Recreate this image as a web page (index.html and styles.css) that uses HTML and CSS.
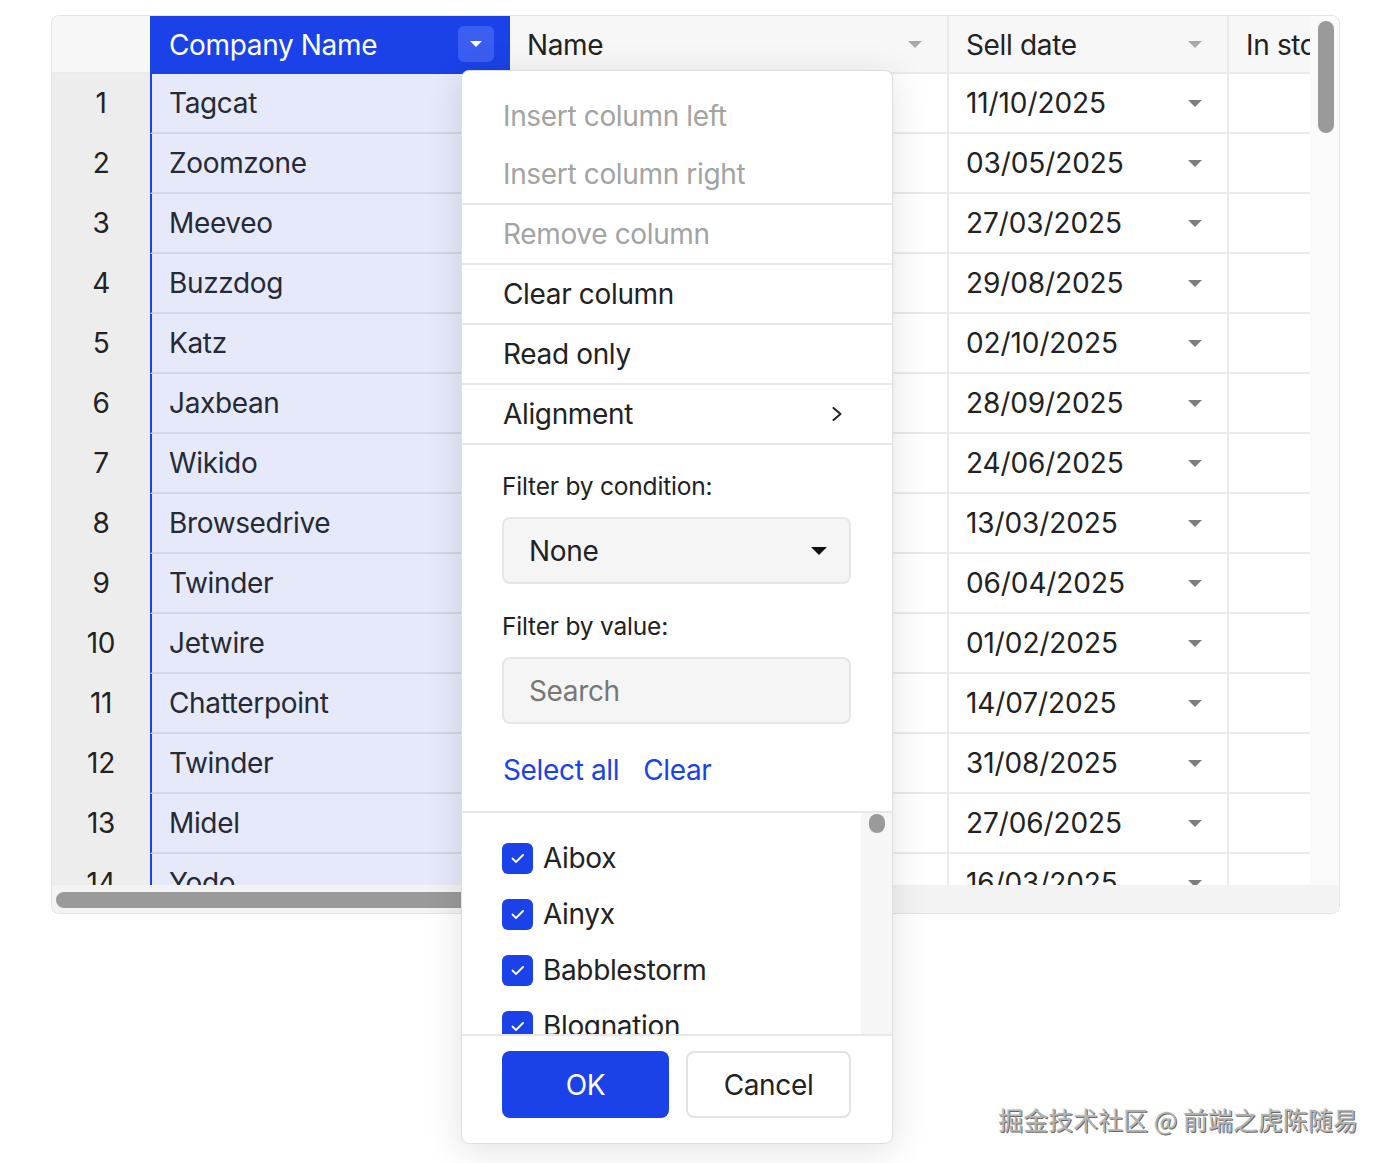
FILE: index.html
```html
<!DOCTYPE html>
<html lang="en">
<head>
<meta charset="utf-8">
<title>Data grid – column menu</title>
<link rel="stylesheet" href="styles.css">
</head>
<body>
<div class="page">
  <div class="hot">
    <div class="viewport">
      <div class="row head">
        <div class="cell corner"></div>
        <div class="cell colhead sel"><span class="lbl">Company Name</span><span class="menu-btn"><i class="tri white"></i></span></div>
        <div class="cell colhead"><span class="lbl">Name</span><i class="tri light"></i></div>
        <div class="cell colhead"><span class="lbl">Sell date</span><i class="tri light"></i></div>
        <div class="cell colhead last"><span class="lbl">In stock</span></div>
      </div>

      <div class="row"><div class="cell rh">1</div><div class="cell co">Tagcat</div><div class="cell nm">Classic Vest</div><div class="cell dt"><span>11/10/2025</span><i class="tri dark"></i></div><div class="cell st"></div></div>
      <div class="row"><div class="cell rh">2</div><div class="cell co">Zoomzone</div><div class="cell nm">Cycling Cap</div><div class="cell dt"><span>03/05/2025</span><i class="tri dark"></i></div><div class="cell st"></div></div>
      <div class="row"><div class="cell rh">3</div><div class="cell co">Meeveo</div><div class="cell nm">Full-Finger Gloves</div><div class="cell dt"><span>27/03/2025</span><i class="tri dark"></i></div><div class="cell st"></div></div>
      <div class="row"><div class="cell rh">4</div><div class="cell co">Buzzdog</div><div class="cell nm">HL Mountain Frame</div><div class="cell dt"><span>29/08/2025</span><i class="tri dark"></i></div><div class="cell st"></div></div>
      <div class="row"><div class="cell rh">5</div><div class="cell co">Katz</div><div class="cell nm">Half-Finger Gloves</div><div class="cell dt"><span>02/10/2025</span><i class="tri dark"></i></div><div class="cell st"></div></div>
      <div class="row"><div class="cell rh">6</div><div class="cell co">Jaxbean</div><div class="cell nm">HL Road Frame</div><div class="cell dt"><span>28/09/2025</span><i class="tri dark"></i></div><div class="cell st"></div></div>
      <div class="row"><div class="cell rh">7</div><div class="cell co">Wikido</div><div class="cell nm">HL Touring Frame</div><div class="cell dt"><span>24/06/2025</span><i class="tri dark"></i></div><div class="cell st"></div></div>
      <div class="row"><div class="cell rh">8</div><div class="cell co">Browsedrive</div><div class="cell nm">LL Mountain Frame</div><div class="cell dt"><span>13/03/2025</span><i class="tri dark"></i></div><div class="cell st"></div></div>
      <div class="row"><div class="cell rh">9</div><div class="cell co">Twinder</div><div class="cell nm">LL Road Frame</div><div class="cell dt"><span>06/04/2025</span><i class="tri dark"></i></div><div class="cell st"></div></div>
      <div class="row"><div class="cell rh">10</div><div class="cell co">Jetwire</div><div class="cell nm">Long-Sleeve Logo Jersey</div><div class="cell dt"><span>01/02/2025</span><i class="tri dark"></i></div><div class="cell st"></div></div>
      <div class="row"><div class="cell rh">11</div><div class="cell co">Chatterpoint</div><div class="cell nm">Men's Bib-Shorts</div><div class="cell dt"><span>14/07/2025</span><i class="tri dark"></i></div><div class="cell st"></div></div>
      <div class="row"><div class="cell rh">12</div><div class="cell co">Twinder</div><div class="cell nm">Men's Sports Shorts</div><div class="cell dt"><span>31/08/2025</span><i class="tri dark"></i></div><div class="cell st"></div></div>
      <div class="row"><div class="cell rh">13</div><div class="cell co">Midel</div><div class="cell nm">Mountain Bike Socks</div><div class="cell dt"><span>27/06/2025</span><i class="tri dark"></i></div><div class="cell st"></div></div>
      <div class="row"><div class="cell rh">14</div><div class="cell co">Yodo</div><div class="cell nm">Racing Socks</div><div class="cell dt"><span>16/03/2025</span><i class="tri dark"></i></div><div class="cell st"></div></div>
    </div>
    <div class="vscroll"><div class="vthumb"></div></div>
    <div class="hscroll"><div class="hthumb"></div></div>
  </div>
</div>

<div class="menu">
  <ul class="items">
    <li class="item disabled">Insert column left</li>
    <li class="item disabled">Insert column right</li>
    <li class="item disabled sep">Remove column</li>
    <li class="item sep">Clear column</li>
    <li class="item sep">Read only</li>
    <li class="item sep sub">Alignment
      <svg class="chev" width="10" height="14" viewBox="0 0 10 14"><path d="M1.5 1 L8.5 7 L1.5 13" fill="none" stroke="#222" stroke-width="2" stroke-linecap="round" stroke-linejoin="round"/></svg>
    </li>
  </ul>
  <div class="filters">
    <div class="flabel">Filter by condition:</div>
    <div class="select"><span>None</span><i class="tri black"></i></div>
    <div class="flabel second">Filter by value:</div>
    <div class="search">Search</div>
    <div class="links"><span class="link">Select all</span><span class="link">Clear</span></div>
  </div>
  <div class="values">
    <div class="vlist">
      <div class="vitem"><span class="cb"><svg width="31" height="31" viewBox="0 0 31 31"><path d="M10.5 15.5 L14 19 L21 12" fill="none" stroke="#fff" stroke-width="1.8" stroke-linecap="round" stroke-linejoin="round"/></svg></span>Aibox</div>
      <div class="vitem"><span class="cb"><svg width="31" height="31" viewBox="0 0 31 31"><path d="M10.5 15.5 L14 19 L21 12" fill="none" stroke="#fff" stroke-width="1.8" stroke-linecap="round" stroke-linejoin="round"/></svg></span>Ainyx</div>
      <div class="vitem"><span class="cb"><svg width="31" height="31" viewBox="0 0 31 31"><path d="M10.5 15.5 L14 19 L21 12" fill="none" stroke="#fff" stroke-width="1.8" stroke-linecap="round" stroke-linejoin="round"/></svg></span>Babblestorm</div>
      <div class="vitem"><span class="cb"><svg width="31" height="31" viewBox="0 0 31 31"><path d="M10.5 15.5 L14 19 L21 12" fill="none" stroke="#fff" stroke-width="1.8" stroke-linecap="round" stroke-linejoin="round"/></svg></span>Blognation</div>
      <div class="vitem"><span class="cb"><svg width="31" height="31" viewBox="0 0 31 31"><path d="M10.5 15.5 L14 19 L21 12" fill="none" stroke="#fff" stroke-width="1.8" stroke-linecap="round" stroke-linejoin="round"/></svg></span>Browsedrive</div>
    </div>
    <div class="vtrack"><div class="vtthumb"></div></div>
  </div>
  <div class="actions">
    <button class="btn ok">OK</button>
    <button class="btn cancel">Cancel</button>
  </div>
</div>

<div class="watermark">掘金技术社区 @ 前端之虎陈随易</div>
</body>
</html>
```

FILE: styles.css
```css
* { box-sizing: border-box; }
html, body { margin: 0; padding: 0; background: #fff; }
body {
  width: 1390px;
  height: 1163px;
  position: relative;
  overflow: hidden;
  font-family: Inter, "Noto Sans", "Liberation Sans", sans-serif;
  font-size: 28px;
  letter-spacing: -0.35px;
  color: #222;
}

.page { padding: 15px 0 0 51px; }

/* ---------- grid ---------- */
.hot {
  width: 1289px;
  height: 899px;
  border: 1px solid #e3e3e3;
  border-radius: 8px;
  overflow: hidden;
  display: grid;
  grid-template-columns: 1258px 29px;
  grid-template-rows: 869px 28px;
  background: #fff;
}
.viewport { overflow: hidden; }

.row {
  display: grid;
  grid-template-columns: 98px 360px 439px 280px 240px;
  height: 60px;
}
.row.head { height: 58px; }

.cell {
  display: flex;
  align-items: center;
  white-space: nowrap;
  overflow: hidden;
  border-bottom: 2px solid #ebebeb;
  border-right: 2px solid #ebebeb;
  padding: 0 17px;
}

.corner { background: #f7f7f8; border-right: none; }
.colhead { background: #f7f7f8; justify-content: space-between; padding-right: 25px; }
.colhead .lbl { padding-top: 2px; }
.colhead.last { justify-content: flex-start; }
.colhead.sel {
  background: #1a42e8;
  color: #fff;
  border-right: none;
  border-bottom-color: #1a42e8;
  padding-left: 19px;
  padding-right: 16px;
}
.menu-btn {
  width: 36px;
  height: 36px;
  border-radius: 6px;
  background: #3b5df0;
  display: flex;
  align-items: center;
  justify-content: center;
}

.rh {
  background: #ededed;
  justify-content: center;
  border-right: none;
  border-bottom-color: #ededed;
  padding: 0;
}
.co {
  background: #e5e9f9;
  border-left: 2px solid #1a42e8;
  border-right: none;
  border-bottom-color: #d2d7e6;
  color: #262a36;
}
.dt { justify-content: space-between; padding-right: 25px; }
.dt span { letter-spacing: -0.1px; }

/* triangles */
.tri {
  display: inline-block;
  width: 0;
  height: 0;
  border-left: 7px solid transparent;
  border-right: 7px solid transparent;
  border-top: 7px solid #a8a8a8;
}
.tri.white { border-top-color: #fff; border-left-width: 6px; border-right-width: 6px; border-top-width: 6px; }
.tri.light { border-top-color: #a8a8a8; }
.tri.dark { border-top-color: #7d7d7d; border-left-width: 7.5px; border-right-width: 7.5px; }
.tri.black { border-top-color: #111; border-left-width: 8px; border-right-width: 8px; border-top-width: 8px; }

/* scrollbars */
.vscroll { background: #fafafa; padding: 5px 0 0 8px; }
.vthumb { width: 16px; height: 112px; border-radius: 8px; background: #9a9a9a; }
.hscroll { grid-column: 1 / span 2; background: #f3f3f3; padding: 7px 0 0 4px; }
.hthumb { width: 760px; height: 16px; border-radius: 8px; background: #9a9a9a; }

/* ---------- dropdown menu ---------- */
.menu {
  position: absolute;
  left: 461px;
  top: 70px;
  width: 432px;
  height: 1074px;
  background: #fff;
  border: 1px solid #dedede;
  border-radius: 8px;
  box-shadow: 0 6px 36px rgba(0, 0, 0, 0.12);
  overflow: hidden;
}
.items { list-style: none; margin: 0; padding: 16px 0 0; }
.item {
  height: 58px;
  display: flex;
  align-items: center;
  justify-content: space-between;
  padding: 0 50px 0 41px;
}
.item.sep { border-top: 2px solid #e8e8e8; height: 60px; }
.item.disabled { color: #a3a3a3; }

.filters {
  border-top: 2px solid #e8e8e8;
  border-bottom: 2px solid #e8e8e8;
  padding: 23px 41px 23px 40px;
}
.flabel { font-size: 24.5px; line-height: 36px; height: 36px; letter-spacing: -0.2px; }
.flabel.second { margin-top: 24px; }
.select, .search {
  margin-top: 13px;
  height: 67px;
  border: 2px solid #e6e6e6;
  border-radius: 8px;
  background: #f5f5f5;
  display: flex;
  align-items: center;
  padding: 0 22px 0 25px;
}
.select { justify-content: space-between; }
.search { color: #777; }
.links { margin-top: 28px; height: 36px; line-height: 36px; display: flex; gap: 24px; padding-left: 1px; }
.link { color: #1a42e8; }

.values {
  height: 223px;
  border-bottom: 2px solid #e8e8e8;
  display: grid;
  grid-template-columns: 1fr 31px;
  overflow: hidden;
}
.vlist { padding: 17px 0 0 40px; overflow: hidden; }
.vitem { height: 56px; display: flex; align-items: center; gap: 10px; }
.cb {
  width: 31px;
  height: 31px;
  border-radius: 6px;
  background: #1a42e8;
  display: block;
  flex: none;
}
.cb svg { display: block; }
.vtrack { background: #f6f6f6; padding: 1px 0 0 8px; }
.vtthumb { width: 16px; height: 19px; border-radius: 8px; background: #9a9a9a; }

.actions { display: flex; gap: 17px; padding: 15px 41px 0 40px; }
.btn {
  height: 67px;
  border-radius: 8px;
  font-family: inherit;
  font-size: 28px;
  letter-spacing: -0.35px;
  cursor: pointer;
}
.btn.ok { width: 167px; background: #1a42e8; color: #fff; border: none; }
.btn.cancel { width: 165px; background: #fff; color: #222; border: 2px solid #e3e3e3; }

/* ---------- watermark ---------- */
.watermark {
  position: absolute;
  right: 32px;
  top: 1102px;
  font-family: "Noto Sans CJK SC", "Noto Sans", sans-serif;
  font-size: 25px;
  line-height: 34px;
  letter-spacing: 0;
  color: #b4b4b4;
  text-shadow: 1px 1px 0 #6a6a6a, -1px -1px 0 #f4f4f4;
  white-space: nowrap;
}
```
